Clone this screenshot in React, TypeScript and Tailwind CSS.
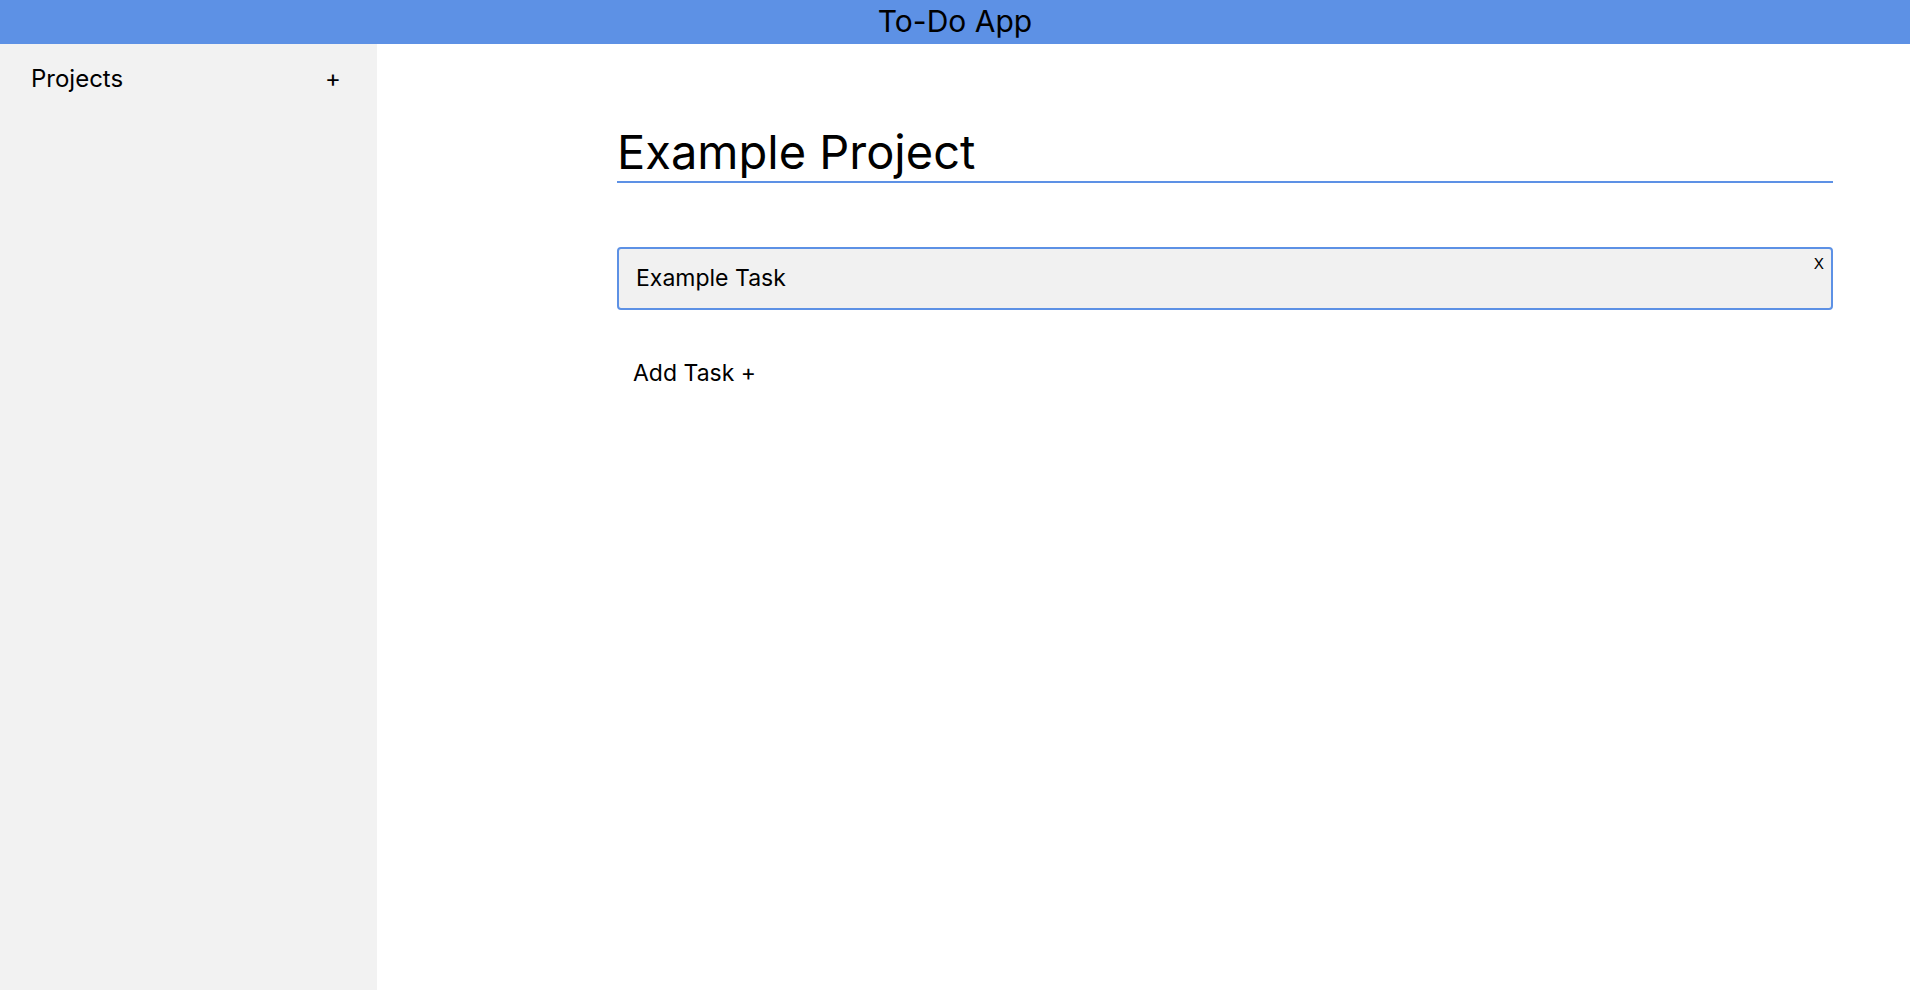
import { useState } from 'react'

interface Task {
  id: number
  title: string
}

export default function App() {
  const [tasks, setTasks] = useState<Task[]>([{ id: 1, title: 'Example Task' }])

  function addTask() {
    setTasks((cur) => [...cur, { id: Date.now(), title: 'New Task' }])
  }

  function removeTask(id: number) {
    setTasks((cur) => cur.filter((t) => t.id !== id))
  }

  return (
    <div className="min-h-screen bg-white text-black font-['Inter',sans-serif]">
      <header className="h-[44px] bg-[#5d91e5] flex items-center justify-center">
        <h1 className="text-[30px] leading-none -mt-[2px]">To-Do App</h1>
      </header>

      <div className="flex">
        <aside className="w-[377px] h-[946px] bg-[#f2f2f2] shrink-0">
          <div className="flex items-center justify-between pl-[31px] pr-[36px] pt-[17px]">
            <span className="text-[24px]">Projects</span>
            <button className="text-[24px] leading-none">+</button>
          </div>
        </aside>

        <main className="flex-1 pl-[240px]">
          <div className="w-[1216px] pt-[80px]">
            <h2 className="text-[47px] leading-[56px] pb-[1px] border-b-2 border-[#5d91e5]">
              Example Project
            </h2>

            <div className="mt-[64px] space-y-3">
              {tasks.map((t) => (
                <div
                  key={t.id}
                  className="relative h-[63px] bg-[#f1f1f1] border-2 border-[#5d91e5] rounded-[4px] flex items-center pl-[17px]"
                >
                  <span className="text-[23px]">{t.title}</span>
                  <button
                    onClick={() => removeTask(t.id)}
                    className="absolute right-[7px] top-[7px] text-[15px] leading-none"
                  >
                    X
                  </button>
                </div>
              ))}
            </div>

            <button onClick={addTask} className="mt-[46px] ml-[16px] text-[23px]">
              Add Task +
            </button>
          </div>
        </main>
      </div>
    </div>
  )
}
